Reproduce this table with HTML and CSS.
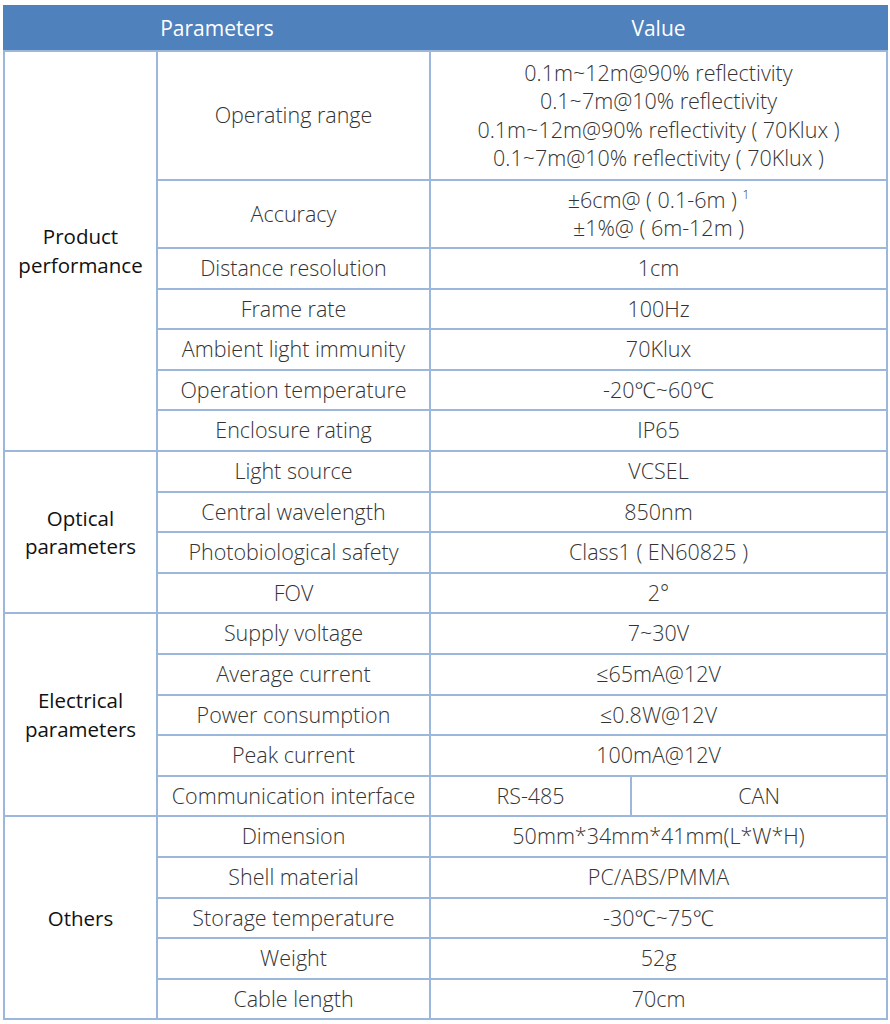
FILE: index.html
```html
<!DOCTYPE html>
<html>
<head>
<meta charset="utf-8">
<link rel="stylesheet" href="styles.css">
</head>
<body>
<table class="spec">
  <colgroup>
    <col class="c1"><col class="c2"><col class="c3a"><col class="c3b">
  </colgroup>
  <thead>
    <tr class="head"><th colspan="2">Parameters</th><th colspan="2">Value</th></tr>
  </thead>
  <tbody>
    <tr class="tall">
      <td class="group" rowspan="7">Product<br>performance</td>
      <td>Operating range</td>
      <td colspan="2">0.1m~12m@90% reflectivity<br>0.1~7m@10% reflectivity<br>0.1m~12m@90% reflectivity ( 70Klux )<br>0.1~7m@10% reflectivity ( 70Klux )</td>
    </tr>
    <tr class="mid"><td>Accuracy</td><td colspan="2">±6cm@ ( 0.1-6m ) <sup>1</sup><br>±1%@ ( 6m-12m )</td></tr>
    <tr><td>Distance resolution</td><td colspan="2">1cm</td></tr>
    <tr><td>Frame rate</td><td colspan="2">100Hz</td></tr>
    <tr><td>Ambient light immunity</td><td colspan="2">70Klux</td></tr>
    <tr><td>Operation temperature</td><td colspan="2">-20℃~60℃</td></tr>
    <tr><td>Enclosure rating</td><td colspan="2">IP65</td></tr>

    <tr><td class="group" rowspan="4">Optical<br>parameters</td><td>Light source</td><td colspan="2">VCSEL</td></tr>
    <tr><td>Central wavelength</td><td colspan="2">850nm</td></tr>
    <tr><td>Photobiological safety</td><td colspan="2">Class1 ( EN60825 )</td></tr>
    <tr><td>FOV</td><td colspan="2">2°</td></tr>

    <tr><td class="group" rowspan="5">Electrical<br>parameters</td><td>Supply voltage</td><td colspan="2">7~30V</td></tr>
    <tr><td>Average current</td><td colspan="2">≤65mA@12V</td></tr>
    <tr><td>Power consumption</td><td colspan="2">≤0.8W@12V</td></tr>
    <tr><td>Peak current</td><td colspan="2">100mA@12V</td></tr>
    <tr><td>Communication interface</td><td>RS-485</td><td>CAN</td></tr>

    <tr><td class="group" rowspan="5">Others</td><td>Dimension</td><td colspan="2">50mm*34mm*41mm(L*W*H)</td></tr>
    <tr><td>Shell material</td><td colspan="2">PC/ABS/PMMA</td></tr>
    <tr><td>Storage temperature</td><td colspan="2">-30℃~75℃</td></tr>
    <tr><td>Weight</td><td colspan="2">52g</td></tr>
    <tr><td>Cable length</td><td colspan="2">70cm</td></tr>
  </tbody>
</table>
</body>
</html>
```
FILE: styles.css
```css
html, body {
  margin: 0;
  padding: 0;
  background: #ffffff;
}
body {
  padding: 5px 0 0 3px;
  font-family: "Open Sans", "Noto Sans", "DejaVu Sans", sans-serif;
}
.spec {
  border-collapse: collapse;
  table-layout: fixed;
  width: 883px;
}
.c1 { width: 153px; }
.c2 { width: 273px; }
.c3a { width: 201px; }
.c3b { width: 256px; }

.spec th, .spec td {
  border: 2px solid #9bb7dc;
  text-align: center;
  vertical-align: middle;
  padding: 0;
  font-size: 21.5px;
  line-height: 28.5px;
  font-weight: 300;
  color: #333333;
}
.spec tr { height: 40.6px; }
.spec tr.head { height: 45px; }
.spec th {
  background: #4f81bd;
  color: #ffffff;
  font-size: 21px;
  font-weight: 400;
  border-color: #4f81bd;
  border-bottom-color: #9bb7dc;
}
.spec tr.tall { height: 129px; }
.spec tr.mid { height: 68px; }
.spec td.group {
  color: #111111;
  font-weight: 400;
  font-size: 20.5px;
}
.spec sup {
  font-size: 12px;
  line-height: 0;
  vertical-align: 9px;
}
```
